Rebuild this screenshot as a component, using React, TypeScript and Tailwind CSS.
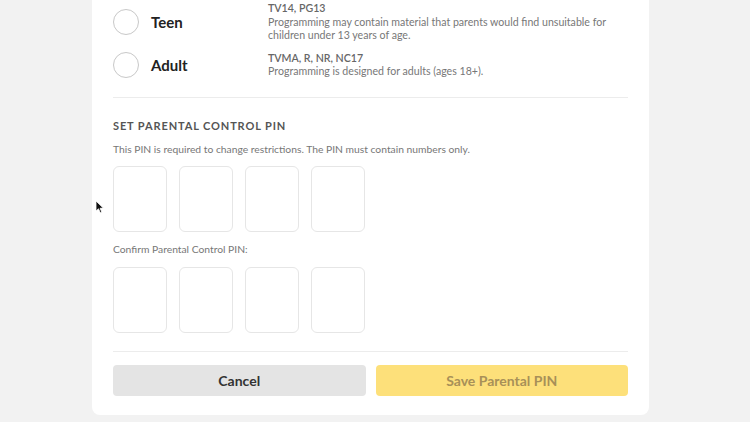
import React from "react";

const ratings = [
  {
    label: "Teen",
    codes: "TV14, PG13",
    text: "Programming may contain material that parents would find unsuitable for children under 13 years of age.",
  },
  {
    label: "Adult",
    codes: "TVMA, R, NR, NC17",
    text: "Programming is designed for adults (ages 18+).",
  },
];

function PinRow() {
  return (
    <div className="flex gap-[12px]">
      {[0, 1, 2, 3].map((i) => (
        <div
          key={i}
          className="w-[54px] h-[66px] rounded-[6px] border border-[#e6e6e6] bg-white"
        />
      ))}
    </div>
  );
}

export default function App() {
  return (
    <div
      className="relative w-[750px] h-[422px] overflow-hidden bg-[#f2f2f2]"
      style={{ fontFamily: "Lato, 'Noto Sans', sans-serif" }}
    >
      <div className="ml-[92px] w-[557px] h-[415px] bg-white rounded-b-[8px] px-[21px] pt-[2px]">
        <div className="flex flex-col gap-[9px]">
          {ratings.map((r) => (
            <div key={r.label} className="flex items-center">
              <div className="w-[26px] h-[26px] rounded-full border-[1.5px] border-[#c8c8c8] shrink-0" />
              <div className="w-[129px] pl-[12px] text-[15px] font-bold text-[#222]">
                {r.label}
              </div>
              <div className="text-[10.6px] leading-[13.5px] text-[#777] w-[350px]">
                <div className="font-semibold text-[#666]">{r.codes}</div>
                <div>{r.text}</div>
              </div>
            </div>
          ))}
        </div>

        <div className="mt-[18px] h-px bg-[#ececec]" />

        <div className="mt-[20px] text-[11px] font-bold tracking-[0.08em] text-[#555]">
          SET PARENTAL CONTROL PIN
        </div>
        <div className="mt-[8px] text-[10.3px] text-[#777]">
          This PIN is required to change restrictions. The PIN must contain numbers only.
        </div>
        <div className="mt-[9px]">
          <PinRow />
        </div>
        <div className="mt-[10px] text-[10.3px] text-[#777]">
          Confirm Parental Control PIN:
        </div>
        <div className="mt-[9px]">
          <PinRow />
        </div>

        <div className="mt-[18px] h-px bg-[#ececec]" />

        <div className="mt-[13px] flex gap-[10px]">
          <button className="flex-1 h-[31px] rounded-[4px] bg-[#e4e4e4] text-[14px] font-bold text-[#333]">
            Cancel
          </button>
          <button className="flex-1 h-[31px] rounded-[4px] bg-[#fde07a] text-[14px] font-bold text-[#a89058]">
            Save Parental PIN
          </button>
        </div>
      </div>

      <svg
        className="absolute left-[95px] top-[200px]"
        width="10"
        height="14"
        viewBox="0 0 10 14"
      >
        <path
          d="M1 1 L1 11 L3.5 8.8 L5.3 12.8 L6.8 12.1 L5.1 8.3 L8.3 8.1 Z"
          fill="#111"
          stroke="#fff"
          strokeWidth="0.8"
        />
      </svg>
    </div>
  );
}
